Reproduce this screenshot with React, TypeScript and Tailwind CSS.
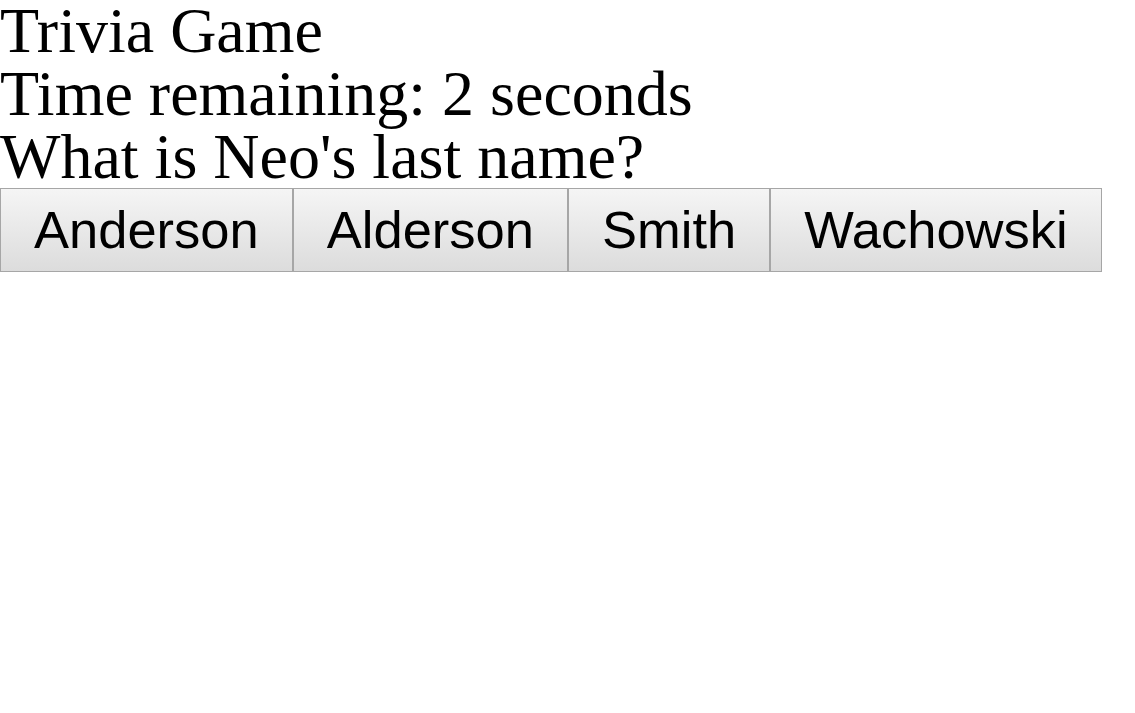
import type { FC } from 'react';

const answers = ['Anderson', 'Alderson', 'Smith', 'Wachowski'];

const App: FC = () => (
  <div className="bg-white text-black min-h-screen">
    <div className="-mt-px font-['Liberation_Serif',serif] text-[64px] leading-[63px]">
      <div>Trivia Game</div>
      <div>Time remaining: 2 seconds</div>
      <div>What is Neo's last name?</div>
    </div>
    <div className="flex">
      {answers.map((answer) => (
        <button
          key={answer}
          type="button"
          className="font-['Liberation_Sans',Arial,sans-serif] text-[52.5px] leading-[60px] px-[33px] py-[11px] border border-[#a6a6a6] bg-gradient-to-b from-[#f5f5f5] to-[#dcdcdc] text-black"
        >
          {answer}
        </button>
      ))}
    </div>
  </div>
);

export default App;
